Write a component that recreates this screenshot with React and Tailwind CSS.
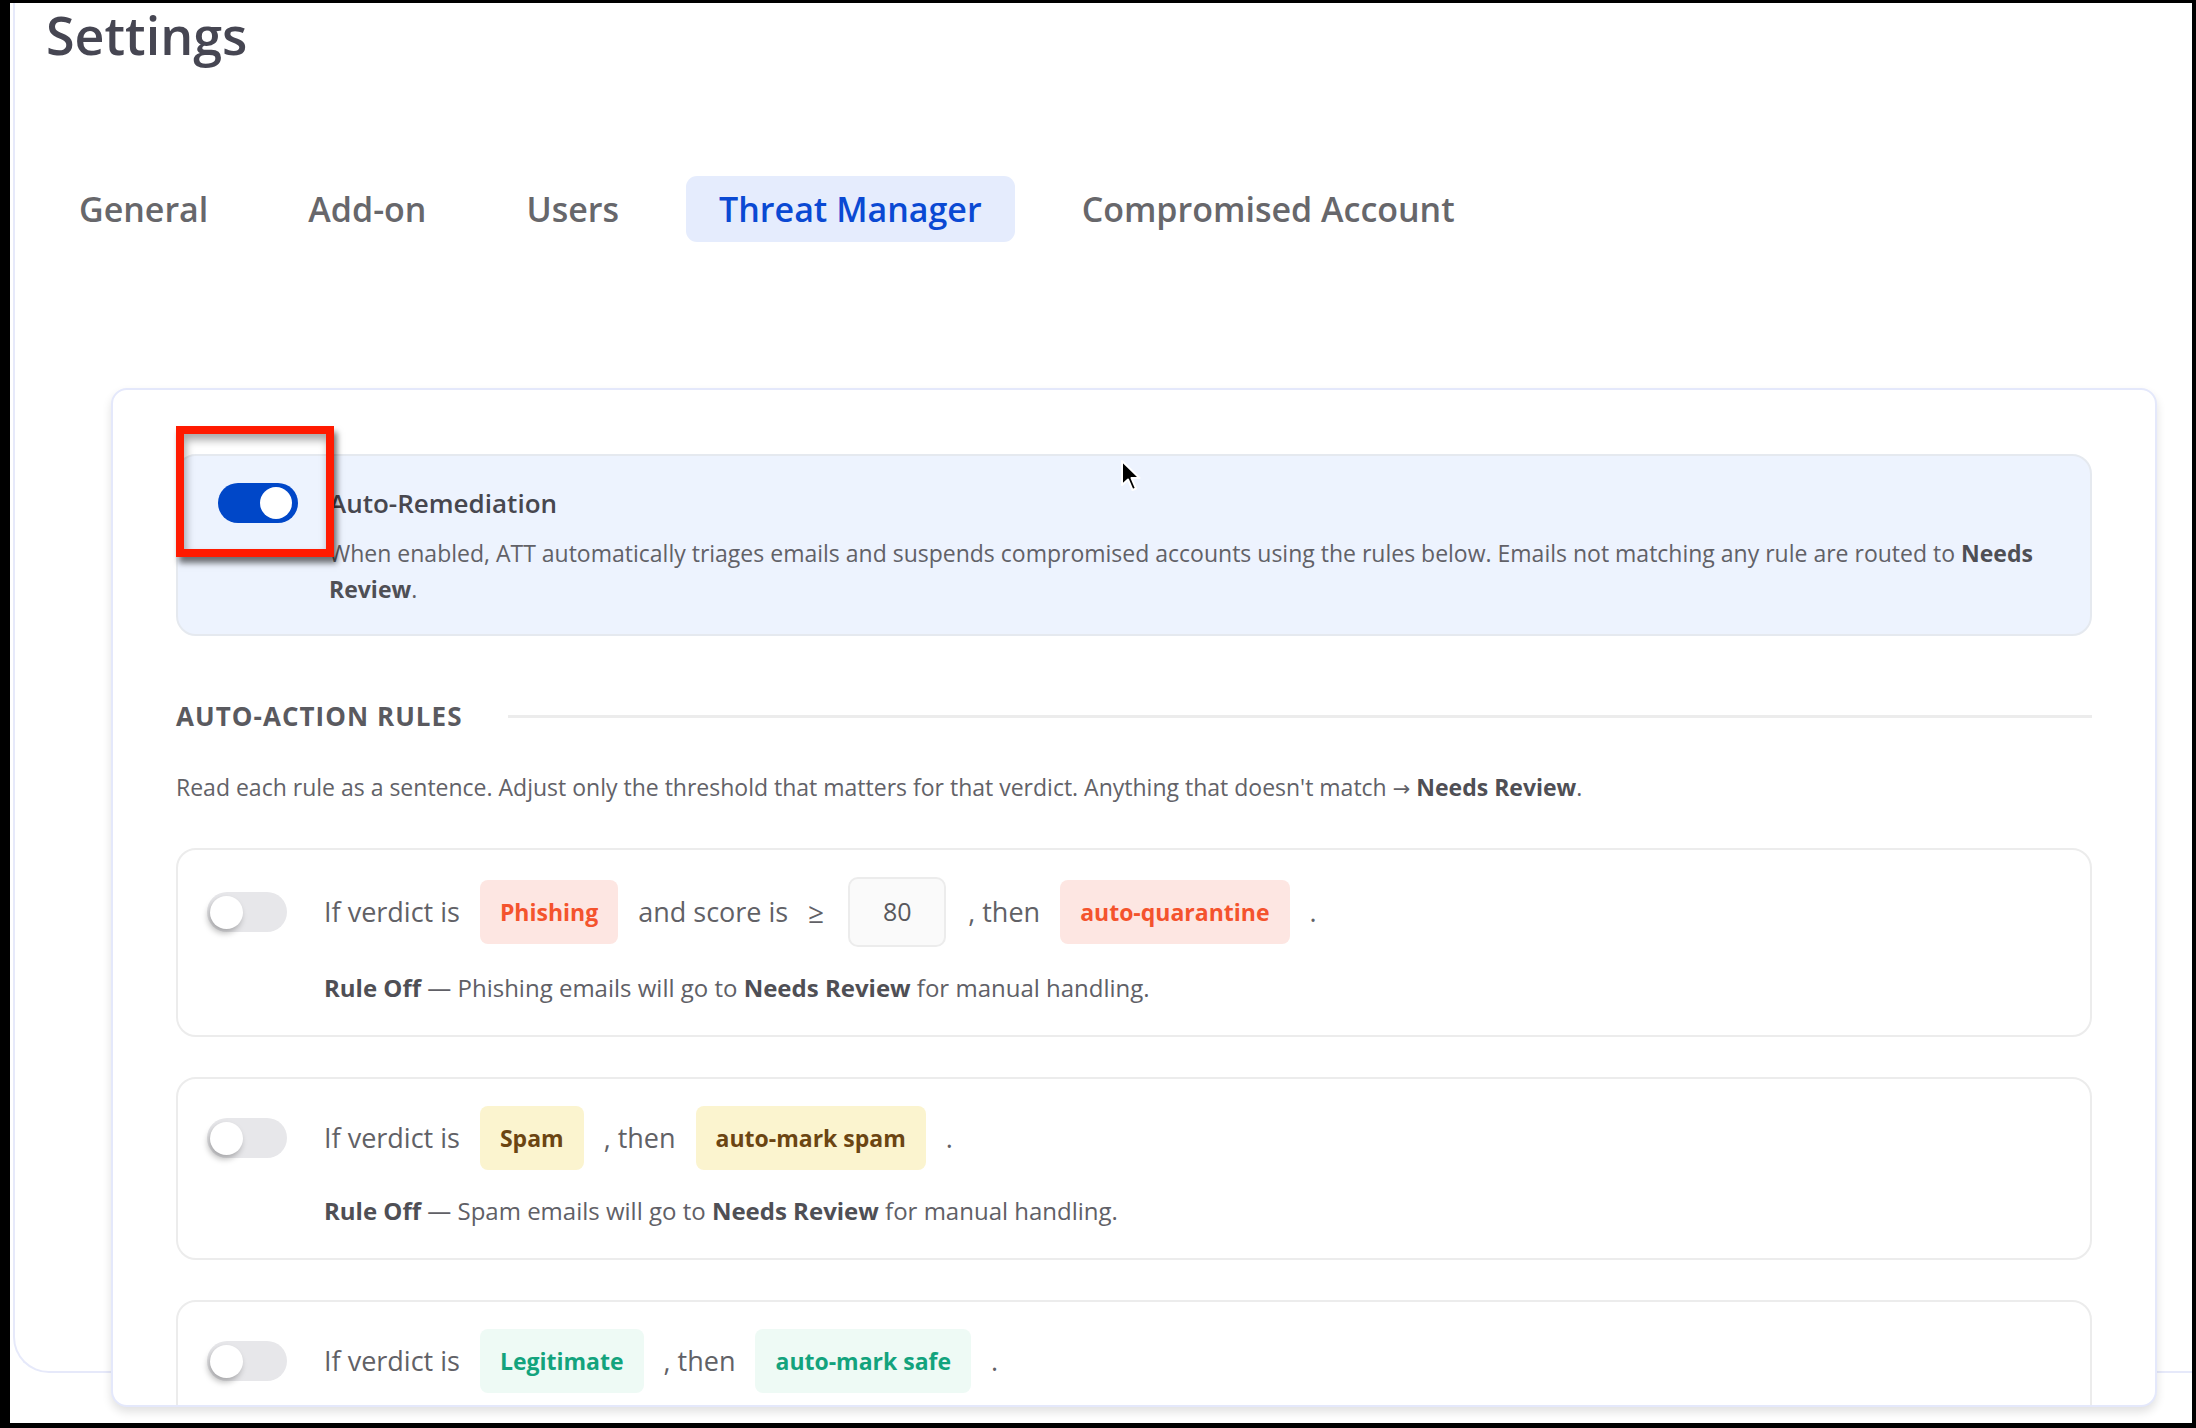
import React from 'react';

const tabs = ['General', 'Add-on', 'Users', 'Threat Manager', 'Compromised Account'];

function Toggle({ on }) {
  if (on) {
    return (
      <div className="relative w-[80px] h-[40px] shrink-0 rounded-full bg-[#0047c8]">
        <div className="absolute right-[6px] top-[4px] w-[32px] h-[32px] rounded-full bg-white" />
      </div>
    );
  }
  return (
    <div className="relative w-[80px] h-[40px] shrink-0 rounded-full bg-[#e7e7ea]">
      <div className="absolute left-[3px] top-[4px] w-[33px] h-[33px] rounded-full bg-white shadow-[-2px_4px_6px_rgba(0,0,0,0.28)]" />
    </div>
  );
}

function Chip({ children, tone }) {
  const tones = {
    red: 'bg-[#fde6e2] text-[#f4532d]',
    yellow: 'bg-[#fbf4cf] text-[#6b4512]',
    green: 'bg-[#eefaf5] text-[#13a37d]',
  };
  return (
    <span className={`h-[64px] px-[20px] flex items-center rounded-[8px] text-[23px] font-bold ${tones[tone]}`}>
      {children}
    </span>
  );
}

function RuleCard({ children, footer }) {
  return (
    <div className="shrink-0 border-2 border-[#ececec] rounded-[20px] bg-white pl-[29px] pt-[27px] pb-[31px]">
      <div className="flex items-center gap-[37px]">
        <Toggle on={false} />
        <div className="flex items-center gap-[20px] text-[27px] text-[#616166]">{children}</div>
      </div>
      {footer && (
        <div className="ml-[117px] mt-[25px] text-[24px] leading-[32px] text-[#606066]">{footer}</div>
      )}
    </div>
  );
}

export default function App() {
  return (
    <div className="w-[2196px] h-[1428px] bg-black pt-[3px] pl-[10px] pr-[4px] pb-[5px] overflow-hidden font-['Open_Sans',sans-serif]">
      <div className="relative h-full bg-white overflow-hidden">
        <div className="h-[1370px] ml-[3px] border-l-2 border-b-2 border-[#e6e9fa] rounded-bl-[36px] pl-[31px]">
          <h1 className="text-[52px] leading-[64px] font-semibold text-[#464652]">Settings</h1>

          {/* tabs */}
          <div className="mt-[109px] flex items-center gap-[34px]">
            {tabs.map((t) => (
              <div
                key={t}
                className={`h-[66px] px-[33px] flex items-center rounded-[11px] text-[34px] leading-none font-semibold ${
                  t === 'Threat Manager' ? 'bg-[#e5ecfd] text-[#0a49d3]' : 'text-[#67676b]'
                }`}
              >
                {t}
              </div>
            ))}
          </div>

          {/* main card */}
          <div className="mt-[146px] ml-[65px] mr-[35px] h-[1019px] overflow-hidden border-2 border-[#e4e8fb] rounded-[16px] bg-white shadow-[0_5px_10px_rgba(0,0,0,0.12)] px-[63px] pt-[64px] flex flex-col">
            <div className="shrink-0 flex items-start gap-[31px] border-2 border-[#e5e9ef] rounded-[20px] bg-[#edf3fe] pl-[40px] pr-[40px] pt-[27px] pb-[27px]">
              <Toggle on />
              <div>
                <div className="text-[26px] leading-[40px] font-semibold text-[#47474f]">Auto-Remediation</div>
                <p className="mt-[12px] text-[23px] leading-[36px] text-[#616167]">
                  When enabled, ATT automatically triages emails and suspends compromised accounts using the rules below. Emails not matching any rule are routed to{' '}
                  <b className="font-bold text-[#4f4f55]">Needs Review</b>.
                </p>
              </div>
            </div>

            <div className="shrink-0 mt-[64px] flex items-center">
              <span className="text-[26px] leading-[32px] font-bold tracking-[0.04em] text-[#5a5a5f]">AUTO-ACTION RULES</span>
              <div className="flex-1 ml-[45px] h-[3px] bg-[#ececec]" />
            </div>

            <p className="shrink-0 mt-[39px] text-[23px] leading-[32px] text-[#626268]">
              Read each rule as a sentence. Adjust only the threshold that matters for that verdict. Anything that doesn't match{' '}
              <span className="font-['DejaVu_Sans',sans-serif] text-[21px]">→</span>{' '}
              <b className="font-bold text-[#4f4f55]">Needs Review</b>.
            </p>

            <div className="mt-[43px] flex flex-col gap-[40px]">
              <RuleCard
                footer={
                  <>
                    <b className="font-bold text-[#4f4f55]">Rule Off</b> — Phishing emails will go to{' '}
                    <b className="font-bold text-[#4f4f55]">Needs Review</b> for manual handling.
                  </>
                }
              >
                <span>If verdict is</span>
                <Chip tone="red">Phishing</Chip>
                <span>and score is</span>
                <span className="text-[28px] mr-[4px]">≥</span>
                <div className="w-[98px] h-[70px] flex items-center justify-center border-2 border-[#ececec] bg-[#fafafa] rounded-[10px] text-[25px] text-[#58585d]">
                  80
                </div>
                <span className="ml-[2px]">, then</span>
                <Chip tone="red">auto-quarantine</Chip>
                <span>.</span>
              </RuleCard>

              <RuleCard
                footer={
                  <>
                    <b className="font-bold text-[#4f4f55]">Rule Off</b> — Spam emails will go to{' '}
                    <b className="font-bold text-[#4f4f55]">Needs Review</b> for manual handling.
                  </>
                }
              >
                <span>If verdict is</span>
                <Chip tone="yellow">Spam</Chip>
                <span>, then</span>
                <Chip tone="yellow">auto-mark spam</Chip>
                <span>.</span>
              </RuleCard>

              <RuleCard>
                <span>If verdict is</span>
                <Chip tone="green">Legitimate</Chip>
                <span>, then</span>
                <Chip tone="green">auto-mark safe</Chip>
                <span>.</span>
              </RuleCard>
            </div>
          </div>
        </div>

        {/* annotation box */}
        <div className="absolute left-[166px] top-[423px] w-[158px] h-[131px] border-[8px] border-[#ff1a00] shadow-[3px_6px_6px_rgba(0,0,0,0.55),inset_2px_6px_8px_rgba(0,0,0,0.35)]" />

        {/* cursor */}
        <svg className="absolute left-[1110px] top-[456px]" width="22" height="34" viewBox="0 0 22 34">
          <path d="M2 2 L2 26 L8 20.5 L12.5 31 L16 29.5 L11.5 19 L19.5 19 Z" fill="#000" stroke="#fff" strokeWidth="2" strokeLinejoin="round" />
        </svg>
      </div>
    </div>
  );
}
